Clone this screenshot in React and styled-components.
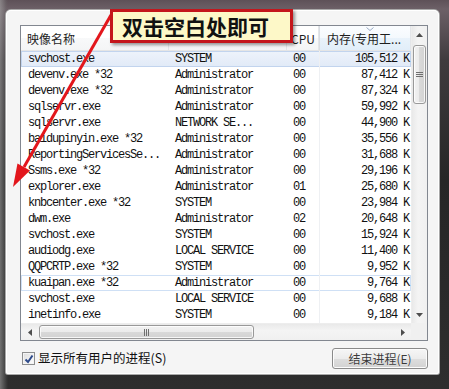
import React from "react";
import styled, { createGlobalStyle } from "styled-components";

const rows = [
  ["svchost.exe", "SYSTEM", "00", "105,512 K"],
  ["devenv.exe *32", "Administrator", "00", "87,412 K"],
  ["devenv.exe *32", "Administrator", "00", "87,324 K"],
  ["sqlservr.exe", "Administrator", "00", "59,992 K"],
  ["sqlservr.exe", "NETWORK SE...", "00", "44,900 K"],
  ["baidupinyin.exe *32", "Administrator", "00", "35,556 K"],
  ["ReportingServicesSe...", "Administrator", "00", "31,688 K"],
  ["Ssms.exe *32", "Administrator", "00", "29,196 K"],
  ["explorer.exe", "Administrator", "01", "25,680 K"],
  ["knbcenter.exe *32", "SYSTEM", "00", "23,984 K"],
  ["dwm.exe", "Administrator", "02", "20,648 K"],
  ["svchost.exe", "SYSTEM", "00", "15,924 K"],
  ["audiodg.exe", "LOCAL SERVICE", "00", "11,400 K"],
  ["QQPCRTP.exe *32", "SYSTEM", "00", "9,952 K"],
  ["kuaipan.exe *32", "Administrator", "00", "9,764 K"],
  ["svchost.exe", "LOCAL SERVICE", "00", "9,688 K"],
  ["inetinfo.exe", "SYSTEM", "00", "9,184 K"],
];

const cols = [148, 118, 32, 92];

const GlobalStyle = createGlobalStyle`
  html, body { margin: 0; padding: 0; }
  body {
    width: 449px;
    height: 389px;
    overflow: hidden;
    background: #2a2a2a;
  }
`;

const Frame = styled.div`
  position: relative;
  width: 449px;
  height: 389px;
  box-sizing: border-box;
  padding: 10px 10px 15px 6px;
  background:
    linear-gradient(90deg, rgba(170, 170, 170, 0.55) 0, rgba(120, 120, 120, 0.2) 6px, transparent 8px),
    linear-gradient(180deg, #5e5158 0, #6c6067 9px, #3f3b3e 60px, #262626 180px, #2e2e2e 100%);
`;

const Panel = styled.div`
  height: 100%;
  box-sizing: border-box;
  padding: 15px 11px 5px 14px;
  background: #f5f5f5;
  border-radius: 5px 5px 2px 2px;
  box-shadow: 0 0 0 1px #a9a9a9, inset 0 0 0 1px #ffffff;
  display: flex;
  flex-direction: column;
  gap: 7px;
`;

const ListView = styled.div`
  width: 408px;
  height: 316px;
  box-sizing: border-box;
  border: 1px solid #828790;
  background: #ffffff;
  display: grid;
  grid-template-columns: 390px 16px;
  grid-template-rows: 297px 17px;
`;

const Table = styled.div`
  overflow: hidden;
`;

const Header = styled.div`
  display: flex;
  height: 25px;
  box-sizing: border-box;
  border-bottom: 1px solid #e5e5e5;
  background: linear-gradient(#ffffff, #ffffff 50%, #f8f9fa 50%, #f4f5f6);
`;

const HeadCell = styled.div`
  position: relative;
  width: ${(p) => p.$w}px;
  box-sizing: border-box;
  padding: 2px 0 0 ${(p) => p.$pad}px;
  border-right: 1px solid #e3e5e8;
  border-left: ${(p) => (p.$sorted ? "1px solid #d9dde3" : "none")};
  background: ${(p) =>
    p.$sorted ? "linear-gradient(#fbfdff, #f4f9fd 50%, #e9f3fb 50%, #e1eef9)" : "transparent"};
  font: 12px/22px "Noto Sans CJK SC", "Noto Sans", sans-serif;
  color: #1e1e1e;
  white-space: nowrap;
  overflow: hidden;
`;

const SortMark = styled.svg`
  position: absolute;
  top: 1px;
  left: 46px;
`;

const Row = styled.div`
  display: flex;
  height: 16px;
  background: ${(p) => (p.$selected ? "linear-gradient(#eef3fb, #e1eaf7)" : "transparent")};
  box-shadow: ${(p) =>
    p.$selected
      ? "inset 0 0 0 1px #c2d4ee"
      : p.$focus
      ? "inset 0 0 0 1px #cfe0f5"
      : "none"};
`;

const Cell = styled.div`
  width: ${(p) => p.$w}px;
  box-sizing: border-box;
  padding: 0 ${(p) => (p.$right ? 2 : 0)}px 0 ${(p) => (p.$right ? 0 : 6)}px;
  text-align: ${(p) => (p.$right ? "right" : "left")};
  border-left: ${(p) => (p.$right ? "1px solid #eef0f3" : "none")};
  font: 12px/16px "Liberation Mono", "DejaVu Sans Mono", monospace;
  letter-spacing: -1.2px;
  color: #111;
  white-space: nowrap;
  overflow: hidden;
`;

const FirstCell = styled(Cell)`
  padding-left: 7px;
`;

const VScroll = styled.div`
  grid-row: 1;
  grid-column: 2;
  display: flex;
  flex-direction: column;
  background: linear-gradient(90deg, #e9e9e9, #f4f4f4 40%, #f0f0f0);
  border-left: 1px solid #ededed;
`;

const HScroll = styled.div`
  grid-row: 2;
  grid-column: 1;
  display: flex;
  background: linear-gradient(#e9e9e9, #f4f4f4 40%, #f0f0f0);
  border-top: 1px solid #ededed;
`;

const Corner = styled.div`
  grid-row: 2;
  grid-column: 2;
  background: #f0f0f0;
`;

const ArrowBtn = styled.div`
  flex: 0 0 17px;
  display: flex;
  align-items: center;
  justify-content: center;
`;

const Track = styled.div`
  flex: 1;
  display: flex;
  flex-direction: ${(p) => (p.$vertical ? "column" : "row")};
  padding: ${(p) => (p.$vertical ? "2px 1px" : "1px 0 1px 1px")};
`;

const Thumb = styled.div`
  ${(p) => (p.$vertical ? "height: 59px;" : "width: 215px;")}
  box-sizing: border-box;
  border: 1px solid #999999;
  border-radius: 3px;
  background: ${(p) =>
    p.$vertical
      ? "linear-gradient(90deg, #f2f2f2, #ebebeb 50%, #d9d9d9 50%, #d2d2d2)"
      : "linear-gradient(#f2f2f2, #ebebeb 50%, #d9d9d9 50%, #d2d2d2)"};
  box-shadow: inset 0 0 0 1px rgba(255, 255, 255, 0.8);
  display: flex;
  align-items: center;
  justify-content: center;
`;

const Bottom = styled.div`
  display: flex;
  align-items: center;
  justify-content: space-between;
  height: 21px;
  width: 408px;
`;

const CheckLabel = styled.label`
  display: flex;
  align-items: center;
  gap: 3px;
  margin-left: 2px;
  font: 12.5px/1 "Noto Sans CJK SC", "Noto Sans", sans-serif;
  color: #111;
`;

const Box = styled.span`
  width: 13px;
  height: 13px;
  box-sizing: border-box;
  border: 1px solid #8e8f8f;
  background: linear-gradient(135deg, #dcdcdc, #ffffff);
  box-shadow: inset 0 0 0 1px #f4f4f4;
  display: flex;
  align-items: center;
  justify-content: center;
`;

const Button = styled.div`
  width: 96px;
  height: 21px;
  box-sizing: border-box;
  border: 1px solid #8a8a8a;
  border-radius: 3px;
  background: linear-gradient(#f6f6f6, #ececec 50%, #dedede 50%, #d2d2d2);
  box-shadow: inset 0 0 0 1px #fcfcfc;
  display: flex;
  align-items: center;
  justify-content: center;
  font: 12px/1 "Noto Sans CJK SC", "Noto Sans", sans-serif;
  color: #3a3a3a;
  text-shadow: 0 0 1px #ffffff;
`;

const Overlay = styled.svg`
  position: absolute;
  left: 0;
  top: 0;
  pointer-events: none;
`;

const Callout = styled.div`
  position: absolute;
  left: 110px;
  top: 9px;
  width: 183px;
  height: 34px;
  box-sizing: border-box;
  border: 3px solid #c4161c;
  background: #fdf8c8;
  box-shadow: 2px 2px 3px rgba(0, 0, 0, 0.4);
  padding-left: 9px;
  font: 700 21px/28px "Noto Sans CJK SC", sans-serif;
  color: #111;
  white-space: nowrap;
`;

const Tri = ({ dir }) => {
  const pts = {
    up: "0,4 3.5,0 7,4",
    down: "0,0 7,0 3.5,4",
    left: "4,0 4,7 0,3.5",
    right: "0,0 0,7 4,3.5",
  }[dir];
  const vert = dir === "up" || dir === "down";
  return (
    <svg width={vert ? 7 : 4} height={vert ? 4 : 7}>
      <polygon points={pts} fill="#4e4e4e" />
    </svg>
  );
};

const Grip = ({ vertical }) =>
  vertical ? (
    <svg width="7" height="6">
      <path d="M0 0.5h7M0 2.5h7M0 4.5h7" stroke="#6f6f6f" strokeWidth="1" />
    </svg>
  ) : (
    <svg width="6" height="7">
      <path d="M0.5 0v7M2.5 0v7M4.5 0v7" stroke="#6f6f6f" strokeWidth="1" />
    </svg>
  );

export default function App() {
  return (
    <>
      <GlobalStyle />
      <Frame>
        <Panel>
          <ListView>
            <Table>
              <Header>
                <HeadCell $w={cols[0]} $pad={6}>映像名称</HeadCell>
                <HeadCell $w={cols[1]} $pad={6} />
                <HeadCell $w={cols[2]} $pad={4}>CPU</HeadCell>
                <HeadCell $w={cols[3]} $pad={7} $sorted>
                  <SortMark width="8" height="4">
                    <path d="M0.5 0.5 L4 3.5 L7.5 0.5" stroke="#9aaac4" fill="none" />
                  </SortMark>
                  内存(专用工...
                </HeadCell>
              </Header>
              {rows.map((r, i) => (
                <Row key={i} $selected={i === 0} $focus={i === 14}>
                  <FirstCell $w={cols[0]}>{r[0]}</FirstCell>
                  <Cell $w={cols[1]}>{r[1]}</Cell>
                  <Cell $w={cols[2]}>{r[2]}</Cell>
                  <Cell $w={cols[3]} $right>
                    {r[3]}
                  </Cell>
                </Row>
              ))}
            </Table>
            <VScroll>
              <ArrowBtn>
                <Tri dir="up" />
              </ArrowBtn>
              <Track $vertical>
                <Thumb $vertical>
                  <Grip vertical />
                </Thumb>
              </Track>
              <ArrowBtn>
                <Tri dir="down" />
              </ArrowBtn>
            </VScroll>
            <HScroll>
              <ArrowBtn>
                <Tri dir="left" />
              </ArrowBtn>
              <Track>
                <Thumb>
                  <Grip />
                </Thumb>
              </Track>
              <ArrowBtn>
                <Tri dir="right" />
              </ArrowBtn>
            </HScroll>
            <Corner />
          </ListView>
          <Bottom>
            <CheckLabel>
              <Box>
                <svg width="10" height="10">
                  <path d="M1.5 5.5 L4 8 L8.5 1.5" stroke="#2d4a8a" strokeWidth="2" fill="none" />
                </svg>
              </Box>
              显示所有用户的进程(S)
            </CheckLabel>
            <Button>结束进程(E)</Button>
          </Bottom>
        </Panel>
        <Overlay width="449" height="389">
          <line x1="111" y1="15" x2="24" y2="167" stroke="#e3161c" strokeWidth="3" />
          <polygon points="13,187 30,170.5 17.5,163.5" fill="#e3161c" />
        </Overlay>
        <Callout>双击空白处即可</Callout>
      </Frame>
    </>
  );
}
